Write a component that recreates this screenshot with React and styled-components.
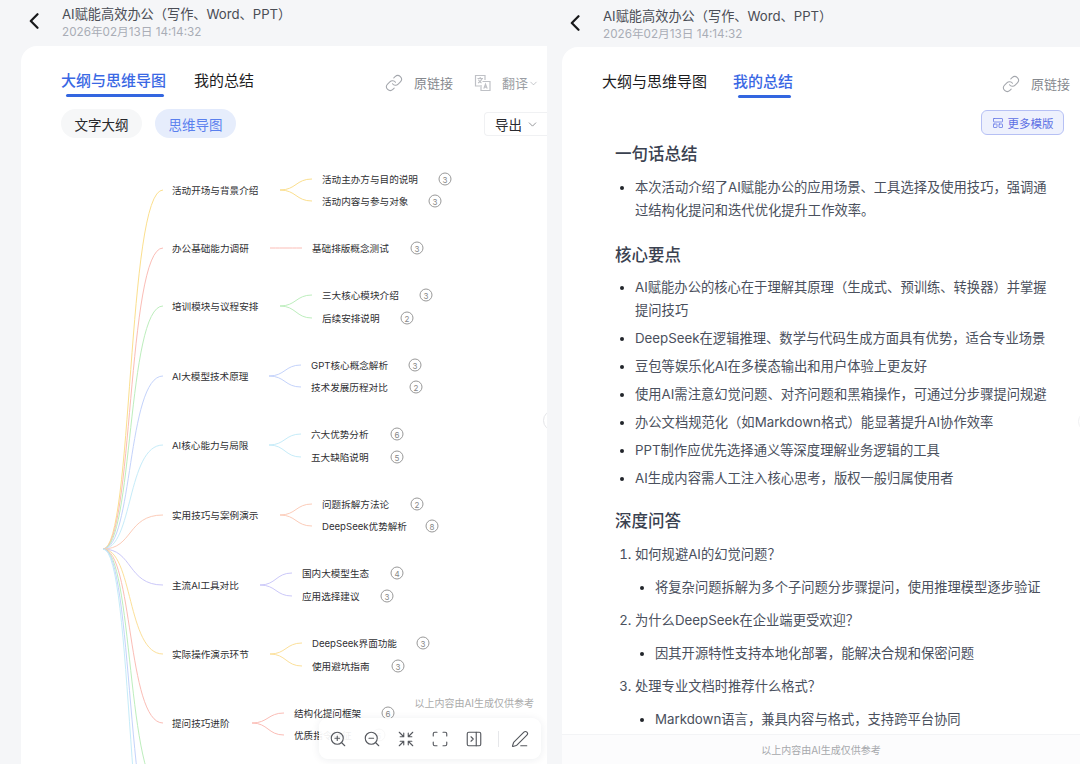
import React from 'react';
import styled, { createGlobalStyle } from 'styled-components';
import { ChevronDown, Link, LayoutPanelTop, Maximize, PanelRightClose, PenLine, Shrink, ZoomIn, ZoomOut } from 'lucide-react';

const GlobalStyle = createGlobalStyle`
  html, body {
    margin: 0;
    padding: 0;
    height: 764px;
    overflow: hidden;
    background: #f5f6f8;
    font-family: Inter, "Noto Sans CJK SC", sans-serif;
  }
  * {
    box-sizing: border-box;
  }
`;

const Page = styled.div`
  width: 1080px;
  height: 764px;
  display: grid;
  grid-template-columns: 547px 533px;
  overflow: hidden;
`;

const Screen = styled.div`
  height: 764px;
  display: flex;
  flex-direction: column;
  overflow: hidden;
  padding-left: ${p => p.$inset}px;
`;

const Header = styled.header`
  height: ${p => p.$height}px;
  padding-top: ${p => p.$top}px;
  display: flex;
  align-items: flex-start;
  flex-shrink: 0;
`;

const BackButton = styled.div`
  width: 10px;
  height: 16px;
  margin: 8px 23px 0 8px;
  flex-shrink: 0;
`;

const Title = styled.div`
  font-size: 13.2px;
  line-height: 18px;
  color: #4a4d55;
  white-space: nowrap;
`;

const DateText = styled.div`
  margin-top: 1px;
  font-size: 11.7px;
  line-height: 16px;
  color: #a9adb6;
  white-space: nowrap;
`;

const Card = styled.div`
  flex: 1;
  min-height: 0;
  background: #fff;
  border-top-left-radius: 16px;
  display: flex;
  flex-direction: column;
  position: relative;
  overflow: hidden;
`;

const TabRow = styled.div`
  height: 51px;
  padding: 24px ${p => p.$right}px 0 40px;
  display: flex;
  align-items: flex-start;
  flex-shrink: 0;
`;

const Tab = styled.div`
  position: relative;
  font-size: 15px;
  line-height: 22px;
  margin-right: ${p => p.$gap || 0}px;
  white-space: nowrap;
  color: ${p => (p.$active ? '#3a68e4' : '#1c1c1e')};
  font-weight: ${p => (p.$active ? 500 : 400)};

  &::after {
    content: '';
    display: ${p => (p.$active ? 'block' : 'none')};
    position: absolute;
    left: 5px;
    right: 2px;
    top: 24px;
    height: 3px;
    border-radius: 2px;
    background: #3366e0;
  }
`;

const Actions = styled.div`
  margin-left: auto;
  padding-top: 3px;
  display: flex;
  align-items: center;
  color: #8b8e94;
  font-size: 13px;
  line-height: 20px;
`;

const ActionLabel = styled.span`
  margin: 0 ${p => p.$gap || 0}px 0 11px;
  color: ${p => p.$color || '#85888e'};
  white-space: nowrap;
`;

const PillRow = styled.div`
  height: 43px;
  padding: 12px 0 0 40px;
  display: flex;
  align-items: flex-start;
  gap: 13px;
  flex-shrink: 0;
`;

const Pill = styled.div`
  width: 81px;
  height: 29px;
  border-radius: 15px;
  display: flex;
  align-items: center;
  justify-content: center;
  font-size: 13.5px;
  color: ${p => (p.$active ? '#5a80ee' : '#26272b')};
  background: ${p => (p.$active ? '#e6edfc' : '#f6f7f8')};
`;

const ExportSelect = styled.div`
  margin: 3px 0 0 auto;
  width: 63px;
  height: 24px;
  padding-left: 10px;
  border: 1px solid #f0f1f3;
  border-right: none;
  border-radius: 4px 0 0 4px;
  display: flex;
  align-items: center;
  gap: 4px;
  font-size: 13.5px;
  color: #2a2b2f;
`;

const MapCanvas = styled.div`
  position: relative;
  flex: 1;
  min-height: 0;
`;

const MapLines = styled.svg`
  position: absolute;
  left: 0;
  top: 0;
`;

const MapNode = styled.div`
  position: absolute;
  left: ${p => p.$x}px;
  top: ${p => p.$y}px;
  margin-top: 1px;
  transform: translateY(-50%);
  font-size: 9.6px;
  line-height: 14px;
  color: #2f2f33;
  white-space: nowrap;
`;

const CountBadge = styled.div`
  position: absolute;
  left: ${p => p.$x}px;
  top: ${p => p.$y}px;
  width: 13px;
  height: 13px;
  transform: translate(-50%, -50%);
  border: 1px solid #999;
  border-radius: 50%;
  display: flex;
  align-items: center;
  justify-content: center;
  font-size: 8px;
  color: #888;
`;

const AiNote = styled.div`
  position: absolute;
  right: 13px;
  bottom: 54px;
  font-size: 10px;
  line-height: 14px;
  color: #ababab;
  white-space: nowrap;
`;

const Toolbar = styled.div`
  position: absolute;
  left: 298px;
  bottom: 5px;
  width: 222px;
  height: 41px;
  padding-left: 2px;
  display: flex;
  align-items: center;
  background: rgba(255, 255, 255, 0.92);
  border-radius: 9px;
  box-shadow: 0 1px 8px rgba(30, 40, 70, 0.08);
  color: #55585e;
`;

const ToolIcon = styled.div`
  width: 34px;
  flex-shrink: 0;
  display: flex;
  justify-content: center;
`;

const ToolDivider = styled.div`
  width: 1px;
  height: 16px;
  flex-shrink: 0;
  margin: 0 4px 0 7px;
  background: #e6e7ea;
`;

const SideHandle = styled.div`
  position: absolute;
  right: ${p => p.$right}px;
  top: 364px;
  width: 21px;
  height: 21px;
  border-radius: 50%;
  border: 1px solid ${p => p.$color};
  background: #fff;
`;

const TemplateRow = styled.div`
  height: 37px;
  padding: 12px 16px 0 0;
  display: flex;
  justify-content: flex-end;
  flex-shrink: 0;
`;

const TemplateButton = styled.div`
  width: 83px;
  height: 25px;
  border: 1px solid #b6c0f4;
  border-radius: 6px;
  background: #eef1fd;
  color: #5d70e4;
  font-size: 11.5px;
  display: flex;
  align-items: center;
  justify-content: center;
  gap: 4px;
`;

const SummaryBody = styled.div`
  flex: 1;
  min-height: 0;
  overflow: hidden;
  padding: 0 30px 0 53px;
  color: #4a505d;
  font-size: 13.3px;
  line-height: 23px;
`;

const SectionTitle = styled.h2`
  margin: ${p => p.$top}px 0 9.5px;
  font-size: 16.5px;
  line-height: 24px;
  font-weight: 500;
  color: #3a4150;
`;

const BulletList = styled.ul`
  margin: 0;
  padding: 0 0 0 20px;
  list-style: disc;

  li {
    margin-bottom: 5px;
  }
  li::marker {
    color: #22252b;
  }
`;

const QuestionList = styled.ol`
  margin: 9px 0 0;
  padding: 0 0 0 20px;
`;

const Question = styled.li`
  margin-bottom: 10px;

  ${BulletList} {
    margin-top: 10px;
  }
`;

const Footer = styled.div`
  height: 30px;
  flex-shrink: 0;
  border-top: 1px solid #f3f4f6;
  background: #fcfcfd;
  display: flex;
  align-items: center;
  justify-content: center;
  font-size: 10px;
  color: #a6a8ac;
`;

const branches = [
  { label: '活动开场与背景介绍', y: 190, childX: 322, color: '#fbdf8e', children: [['活动主办方与目的说明', 179, 445, 3], ['活动内容与参与对象', 201, 435, 3]] },
  { label: '办公基础能力调研', y: 248, childX: 312, color: '#fbbdb6', children: [['基础排版概念测试', 248, 417, 3]] },
  { label: '培训模块与议程安排', y: 306, childX: 322, color: '#bdeebd', children: [['三大核心模块介绍', 295, 426, 3], ['后续安排说明', 318, 407, 2]] },
  { label: 'AI大模型技术原理', y: 376, childX: 311, color: '#c4d3fb', children: [['GPT核心概念解析', 365, 415, 3], ['技术发展历程对比', 387, 416, 2]] },
  { label: 'AI核心能力与局限', y: 445, childX: 311, color: '#c6ecf9', children: [['六大优势分析', 434, 397, 6], ['五大缺陷说明', 457, 397, 5]] },
  { label: '实用技巧与案例演示', y: 515, childX: 322, color: '#fcccb9', children: [['问题拆解方法论', 504, 417, 2], ['DeepSeek优势解析', 526, 432, 8]] },
  { label: '主流AI工具对比', y: 585, childX: 302, color: '#cbc8f9', children: [['国内大模型生态', 573, 397, 4], ['应用选择建议', 596, 387, 3]] },
  { label: '实际操作演示环节', y: 654, childX: 312, color: '#fce09a', children: [['DeepSeek界面功能', 643, 423, 3], ['使用避坑指南', 666, 398, 3]] },
  { label: '提问技巧进阶', y: 723, childX: 294, color: '#fbbdb6', children: [['结构化提问框架', 713, 388, 6], ['优质指令特征', 735, 379, 5]] },
];

// branches below the fold, only their curves are visible
const hiddenCurves = [
  { y: 792, color: '#bdeebd' },
  { y: 861, color: '#c4d3fb' },
  { y: 930, color: '#c6ecf9' },
];

const ORIGIN_X = 21;
const ORIGIN_Y = 140;
const ROOT_X = 103;
const ROOT_Y = 549;
const BRANCH_END = 163;

const px = x => x - ORIGIN_X;
const py = y => y - ORIGIN_Y;

const rootCurve = y => {
  const mid = (ROOT_X + BRANCH_END) / 2;
  return `M${px(ROOT_X)} ${py(ROOT_Y)} C${px(mid)} ${py(ROOT_Y)} ${px(mid - 6)} ${py(y)} ${px(BRANCH_END)} ${py(y)}`;
};

const childCurve = (childX, fromY, toY) => {
  const start = childX - 42;
  const end = childX - 10;
  const mid = (start + end) / 2;
  return `M${px(start)} ${py(fromY)} C${px(mid)} ${py(fromY)} ${px(mid)} ${py(toY)} ${px(end)} ${py(toY)}`;
};

const BackIcon = () => (
  <BackButton>
    <svg width="10" height="16" viewBox="0 0 10 16" fill="none">
      <path d="M8.5 1.2 1.8 8l6.7 6.8" stroke="#17181a" strokeWidth="2.2" strokeLinecap="round" strokeLinejoin="round" />
    </svg>
  </BackButton>
);

const TranslateIcon = () => (
  <svg width="17" height="18" viewBox="0 0 17 18" fill="none" stroke="#bfc1c6" strokeWidth="1.2">
    <path d="M6 12H1.5V1.5H11V6" />
    <path d="M3.5 4.5h5.5M6.2 3v1.5M4 9c2-1 3.3-2.4 4-4.2M4.5 5.6C5 7.2 6.2 8.4 7.5 9" />
    <path d="M8.5 7.5h7.5v9H7V11" />
    <path d="M9.8 14.6l1.7-4.4 1.7 4.4M10.4 13.2h2.2" />
  </svg>
);

const MindMap = () => (
  <MapCanvas>
    <MapLines width="526" height="624" fill="none" strokeWidth="1">
      {[...branches, ...hiddenCurves].map(b => (
        <path key={b.y} d={rootCurve(b.y)} stroke={b.color} />
      ))}
      {branches.map(b =>
        b.children.map(c => <path key={c[0]} d={childCurve(b.childX, b.y, c[1])} stroke={b.color} />)
      )}
    </MapLines>
    {branches.map(b => (
      <React.Fragment key={b.label}>
        <MapNode $x={px(172)} $y={py(b.y)}>{b.label}</MapNode>
        {b.children.map(c => (
          <React.Fragment key={c[0]}>
            <MapNode $x={px(b.childX)} $y={py(c[1])}>{c[0]}</MapNode>
            <CountBadge $x={px(c[2])} $y={py(c[1])}>{c[3]}</CountBadge>
          </React.Fragment>
        ))}
      </React.Fragment>
    ))}
    <AiNote>以上内容由AI生成仅供参考</AiNote>
    <Toolbar>
      <ToolIcon><ZoomIn size={18} strokeWidth={1.5} /></ToolIcon>
      <ToolIcon><ZoomOut size={18} strokeWidth={1.5} /></ToolIcon>
      <ToolIcon><Shrink size={18} strokeWidth={1.5} /></ToolIcon>
      <ToolIcon><Maximize size={18} strokeWidth={1.5} /></ToolIcon>
      <ToolIcon><PanelRightClose size={18} strokeWidth={1.5} /></ToolIcon>
      <ToolDivider />
      <ToolIcon><PenLine size={18} strokeWidth={1.5} /></ToolIcon>
    </Toolbar>
  </MapCanvas>
);

const App = () => (
  <Page>
    <GlobalStyle />
    <Screen $inset={21}>
      <Header $height={46} $top={5}>
        <BackIcon />
        <div>
          <Title>AI赋能高效办公（写作、Word、PPT）</Title>
          <DateText>2026年02月13日 14:14:32</DateText>
        </div>
      </Header>
      <Card>
        <TabRow $right={8}>
          <Tab $active $gap={28}>大纲与思维导图</Tab>
          <Tab>我的总结</Tab>
          <Actions>
            <Link size={18} strokeWidth={1.4} color="#a4a7ad" />
            <ActionLabel $gap={21}>原链接</ActionLabel>
            <TranslateIcon />
            <ActionLabel $color="#9a9da3">翻译</ActionLabel>
            <ChevronDown size={11} strokeWidth={1.4} color="#a4a7ad" />
          </Actions>
        </TabRow>
        <PillRow>
          <Pill>文字大纲</Pill>
          <Pill $active>思维导图</Pill>
          <ExportSelect>
            导出
            <ChevronDown size={13} strokeWidth={1.4} color="#77797e" />
          </ExportSelect>
        </PillRow>
        <MindMap />
        <SideHandle $right={-17} $color="#e4e5e8" />
      </Card>
    </Screen>
    <Screen $inset={15}>
      <Header $height={47} $top={7}>
        <BackIcon />
        <div>
          <Title>AI赋能高效办公（写作、Word、PPT）</Title>
          <DateText>2026年02月13日 14:14:32</DateText>
        </div>
      </Header>
      <Card>
        <TabRow $right={10}>
          <Tab $gap={26}>大纲与思维导图</Tab>
          <Tab $active>我的总结</Tab>
          <Actions>
            <Link size={18} strokeWidth={1.4} color="#a4a7ad" />
            <ActionLabel>原链接</ActionLabel>
          </Actions>
        </TabRow>
        <TemplateRow>
          <TemplateButton>
            <LayoutPanelTop size={12} strokeWidth={1.5} />
            更多模版
          </TemplateButton>
        </TemplateRow>
        <SummaryBody>
          <SectionTitle $top={7}>一句话总结</SectionTitle>
          <BulletList>
            <li>本次活动介绍了AI赋能办公的应用场景、工具选择及使用技巧，强调通过结构化提问和迭代优化提升工作效率。</li>
          </BulletList>
          <SectionTitle $top={21}>核心要点</SectionTitle>
          <BulletList>
            <li>AI赋能办公的核心在于理解其原理（生成式、预训练、转换器）并掌握提问技巧</li>
            <li>DeepSeek在逻辑推理、数学与代码生成方面具有优势，适合专业场景</li>
            <li>豆包等娱乐化AI在多模态输出和用户体验上更友好</li>
            <li>使用AI需注意幻觉问题、对齐问题和黑箱操作，可通过分步骤提问规避</li>
            <li>办公文档规范化（如Markdown格式）能显著提升AI协作效率</li>
            <li>PPT制作应优先选择通义等深度理解业务逻辑的工具</li>
            <li>AI生成内容需人工注入核心思考，版权一般归属使用者</li>
          </BulletList>
          <SectionTitle $top={19}>深度问答</SectionTitle>
          <QuestionList>
            <Question>
              如何规避AI的幻觉问题？
              <BulletList>
                <li>将复杂问题拆解为多个子问题分步骤提问，使用推理模型逐步验证</li>
              </BulletList>
            </Question>
            <Question>
              为什么DeepSeek在企业端更受欢迎？
              <BulletList>
                <li>因其开源特性支持本地化部署，能解决合规和保密问题</li>
              </BulletList>
            </Question>
            <Question>
              处理专业文档时推荐什么格式？
              <BulletList>
                <li>Markdown语言，兼具内容与格式，支持跨平台协同</li>
              </BulletList>
            </Question>
          </QuestionList>
        </SummaryBody>
        <Footer>以上内容由AI生成仅供参考</Footer>
        <SideHandle $right={-19} $color="#f0f1f3" />
      </Card>
    </Screen>
  </Page>
);

export default App;
